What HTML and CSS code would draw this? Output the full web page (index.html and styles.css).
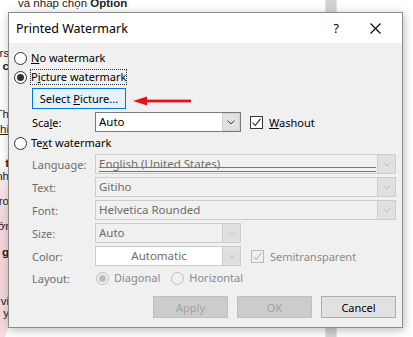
FILE: index.html
```html
<!DOCTYPE html>
<html>
<head>
<meta charset="utf-8">
<link rel="stylesheet" href="styles.css">
</head>
<body>
<div class="page">
  <div class="doc-top">và nhấp chọn <b>Option</b></div>
  <div class="doc-bar top"></div>
  <div class="doc-bar bottom"></div>
  <div class="pink"></div>
  <div class="frags">
    <div class="frag f1">rs</div>
    <div class="frag f2"><b>c</b></div>
    <div class="frag f3">Th</div>
    <div class="frag f4"><u>hi</u></div>
    <div class="frag f5"><b>t</b></div>
    <div class="frag f6">nh</div>
    <div class="frag f7">ro</div>
    <div class="frag f8">ớr</div>
    <div class="frag f9"><b>g</b></div>
    <div class="frag f10">vi</div>
    <div class="frag f11">y</div>
  </div>

  <div class="dialog">
    <div class="titlebar">
      <span class="title">Printed Watermark</span>
      <span class="help">?</span>
      <svg class="close" width="11" height="11" viewBox="0 0 11 11"><path d="M0.5 0.5L10.5 10.5M10.5 0.5L0.5 10.5" stroke="#000" stroke-width="1.1" fill="none"/></svg>
    </div>
    <div class="body">
      <div class="row radio-row r1">
        <span class="radio"></span><span class="rlabel"><u>N</u>o watermark</span>
      </div>
      <div class="row radio-row r2">
        <span class="radio checked"></span><span class="rlabel focus">P<u>i</u>cture watermark</span>
      </div>
      <div class="row r3">
        <button class="btn select">Select <u>P</u>icture...</button>
      </div>
      <div class="row field r4">
        <span class="label">Sca<u>l</u>e:</span>
        <div class="combo short enabled"><span class="ctext">Auto</span><span class="drop"><svg width="8" height="5" viewBox="0 0 8 5"><path d="M0.5 0.5L4 4L7.5 0.5" stroke="#444" fill="none"/></svg></span></div>
        <span class="check checked"><svg width="11" height="11" viewBox="0 0 11 11"><path d="M1.5 5.5L4.2 8.5L9.5 1.8" stroke="#222" stroke-width="1.1" fill="none"/></svg></span>
        <span class="clabel"><u>W</u>ashout</span>
      </div>
      <div class="row radio-row r5">
        <span class="radio"></span><span class="rlabel">Te<u>x</u>t watermark</span>
      </div>
      <div class="row field dis">
        <span class="label">Language:</span>
        <div class="combo long"><span class="ctext spell">English (United States)</span><span class="drop"><svg width="8" height="5" viewBox="0 0 8 5"><path d="M0.5 0.5L4 4L7.5 0.5" stroke="#bdbdbd" fill="none"/></svg></span></div>
      </div>
      <div class="row field dis">
        <span class="label">Text:</span>
        <div class="combo long"><span class="ctext">Gitiho</span><span class="drop"><svg width="8" height="5" viewBox="0 0 8 5"><path d="M0.5 0.5L4 4L7.5 0.5" stroke="#bdbdbd" fill="none"/></svg></span></div>
      </div>
      <div class="row field dis">
        <span class="label">Font:</span>
        <div class="combo long"><span class="ctext">Helvetica Rounded</span><span class="drop"><svg width="8" height="5" viewBox="0 0 8 5"><path d="M0.5 0.5L4 4L7.5 0.5" stroke="#bdbdbd" fill="none"/></svg></span></div>
      </div>
      <div class="row field dis">
        <span class="label">Size:</span>
        <div class="combo short"><span class="ctext">Auto</span><span class="drop"><svg width="8" height="5" viewBox="0 0 8 5"><path d="M0.5 0.5L4 4L7.5 0.5" stroke="#bdbdbd" fill="none"/></svg></span></div>
      </div>
      <div class="row field dis">
        <span class="label">Color:</span>
        <div class="combo short white"><span class="ctext center">Automatic</span><span class="drop"><svg width="8" height="5" viewBox="0 0 8 5"><path d="M0.5 0.5L4 4L7.5 0.5" stroke="#bdbdbd" fill="none"/></svg></span></div>
        <span class="check dcheck"><svg width="11" height="11" viewBox="0 0 11 11"><path d="M1.5 5.5L4.2 8.5L9.5 1.8" stroke="#bcbcbc" stroke-width="1.1" fill="none"/></svg></span>
        <span class="clabel dtext">Semitransparent</span>
      </div>
      <div class="row field dis layout">
        <span class="label">Layout:</span>
        <span class="radio dradio checked"></span><span class="rlabel dtext">Diagonal</span>
        <span class="radio dradio h"></span><span class="rlabel dtext">Horizontal</span>
      </div>
      <div class="row buttons">
        <button class="btn dbtn">Apply</button>
        <button class="btn dbtn">OK</button>
        <button class="btn cancel">Cancel</button>
      </div>
    </div>
    <svg class="arrow" width="60" height="10" viewBox="0 0 60 10"><path d="M0 5L14 0.5L14 9.5Z" fill="#e3131b"/><rect x="13" y="3.6" width="45" height="2.8" fill="#e3131b"/></svg>
  </div>
</div>
</body>
</html>
```

FILE: styles.css
```css
* { box-sizing: border-box; }
html, body { margin: 0; padding: 0; }
body {
  width: 413px;
  height: 337px;
  overflow: hidden;
  background: #fff;
  font-family: "Noto Sans", "Open Sans", sans-serif;
  font-size: 11px;
  color: #000;
}
.page {
  position: relative;
  width: 413px;
  height: 337px;
  overflow: hidden;
}
.doc-top {
  position: absolute;
  left: 18px;
  top: -3px;
  font-family: "Liberation Sans", sans-serif;
  font-size: 11.5px;
  color: #222;
}
.doc-bar {
  position: absolute;
  left: 325px;
  width: 12px;
  background: #d3d3d3;
  border-left: 1px solid #e4e4e4;
  border-right: 1px solid #e4e4e4;
}
.doc-bar.top { top: 0; height: 14px; }
.doc-bar.bottom { top: 326px; height: 11px; }
.pink {
  position: absolute;
  left: -40px;
  top: 150px;
  width: 60px;
  height: 200px;
  border-radius: 50%;
  background: radial-gradient(ellipse at 40% 60%, #efc5cb 0%, #f6dde0 55%, rgba(255,255,255,0) 75%);
}
.frags {
  position: absolute;
  left: 0;
  top: 0;
  width: 10px;
  font-family: "Liberation Sans", sans-serif;
  font-size: 11.5px;
  color: #222;
}
.frag { position: absolute; right: 1px; line-height: 11px; white-space: nowrap; }
.f1 { top: 48px; }
.f2 { top: 61px; }
.f3 { top: 109px; }
.f4 { top: 124px; }
.f5 { top: 158px; }
.f6 { top: 171px; }
.f7 { top: 196px; }
.f8 { top: 221px; }
.f9 { top: 247px; }
.f10 { top: 296px; }
.f11 { top: 308px; }

.dialog {
  position: absolute;
  left: 8px;
  top: 12px;
  width: 395px;
  height: 316px;
  border: 1px solid #8c8c8c;
  background: #f0f0f0;
  box-shadow: 1px 2px 9px rgba(0,0,0,0.28);
  display: flex;
  flex-direction: column;
}
.titlebar {
  height: 30px;
  background: #fff;
  display: flex;
  align-items: center;
  padding-left: 7px;
  flex: none;
}
.title { font-size: 12.5px; flex: 1; padding-top: 1px; }
.help { font-size: 12.5px; margin-right: 31px; padding-top: 1px; }
.close { margin-right: 21px; }

.body {
  display: flex;
  flex-direction: column;
  padding: 7px 6px 0 5px;
}
.row { display: flex; align-items: center; flex: none; }
.radio-row { height: 16px; }
.r1 { margin-top: 0; }
.r2 { margin-top: 3px; }
.r3 { margin-top: 3px; padding-left: 18px; }
.r4 { margin-top: 5px; }
.r5 { margin-top: 3px; }
.field { height: 20px; padding-left: 18px; margin-top: 3px; }
.layout { height: 16px; margin-top: 4px; }
.radio {
  width: 13px;
  height: 13px;
  border: 1px solid #333;
  border-radius: 50%;
  background: #fff;
  flex: none;
  position: relative;
}
.radio.checked::after {
  content: "";
  position: absolute;
  left: 2px; top: 2px;
  width: 7px; height: 7px;
  border-radius: 50%;
  background: #333;
}
.rlabel { margin-left: 3px; line-height: 14px; padding: 0; border: 1px solid transparent; }
.rlabel.focus { border: 1px dotted #333; }
.btn {
  font-family: inherit;
  font-size: 11px;
  height: 21px;
  border: 1px solid #adadad;
  background: #e1e1e1;
  color: #000;
  padding: 0;
  margin: 0;
}
.select {
  width: 94px;
  background: #e5f1fb;
  border-color: #0078d7;
}
.label { width: 63px; color: #000; flex: none; }
.dis .label { color: #6d6d6d; }
.combo {
  height: 20px;
  border: 1px solid #ccc;
  background: #f0f0f0;
  display: flex;
  align-items: stretch;
  flex: none;
  position: relative;
}
.combo.short { width: 146px; }
.combo.long { width: 301px; }
.combo.enabled { border-color: #7a7a7a; background: #fff; }
.combo.white { background: #fff; }
.ctext { flex: 1; padding-left: 3px; line-height: 18px; color: #6d6d6d; white-space: nowrap; font-size: 11.5px; }
.enabled .ctext { color: #000; }
.ctext.center { text-align: center; padding-left: 0; }
.ctext.spell { position: relative; }
.ctext.spell::after {
  content: "";
  position: absolute;
  left: 3px; right: 1px; bottom: 1px;
  height: 3px;
  border-top: 1px solid #777;
  border-bottom: 1px solid #777;
}
.drop {
  width: 18px;
  flex: none;
  display: flex;
  align-items: center;
  justify-content: center;
  background: #e0e0e0;
  border-left: 1px solid #ccc;
}
.enabled .drop { background: #e1e1e1; border: 1px solid #cfcfcf; }
.check {
  width: 13px;
  height: 13px;
  border: 1px solid #333;
  background: #fff;
  margin-left: 9px;
  flex: none;
  display: flex;
  align-items: center;
  justify-content: center;
}
.dcheck { border-color: #bcbcbc; background: #f0f0f0; margin-left: 10px; }
.clabel { margin-left: 6px; }
.dtext { color: #8a8a8a; }
.dradio { border-color: #bcbcbc; background: #f0f0f0; }
.dradio.checked::after { background: #bcbcbc; }
.layout .rlabel { margin-left: 4px; }
.layout .dradio.checked { margin-left: 1px; }
.dradio.h { margin-left: 10px; }
.buttons {
  margin-top: 10px;
  justify-content: flex-end;
  gap: 9px;
}
.buttons .btn { width: 75px; height: 22px; }
.dbtn { background: #cccccc; border-color: #bfbfbf; color: #a3a3a3; }
.arrow { position: absolute; left: 124px; top: 83px; }
```
